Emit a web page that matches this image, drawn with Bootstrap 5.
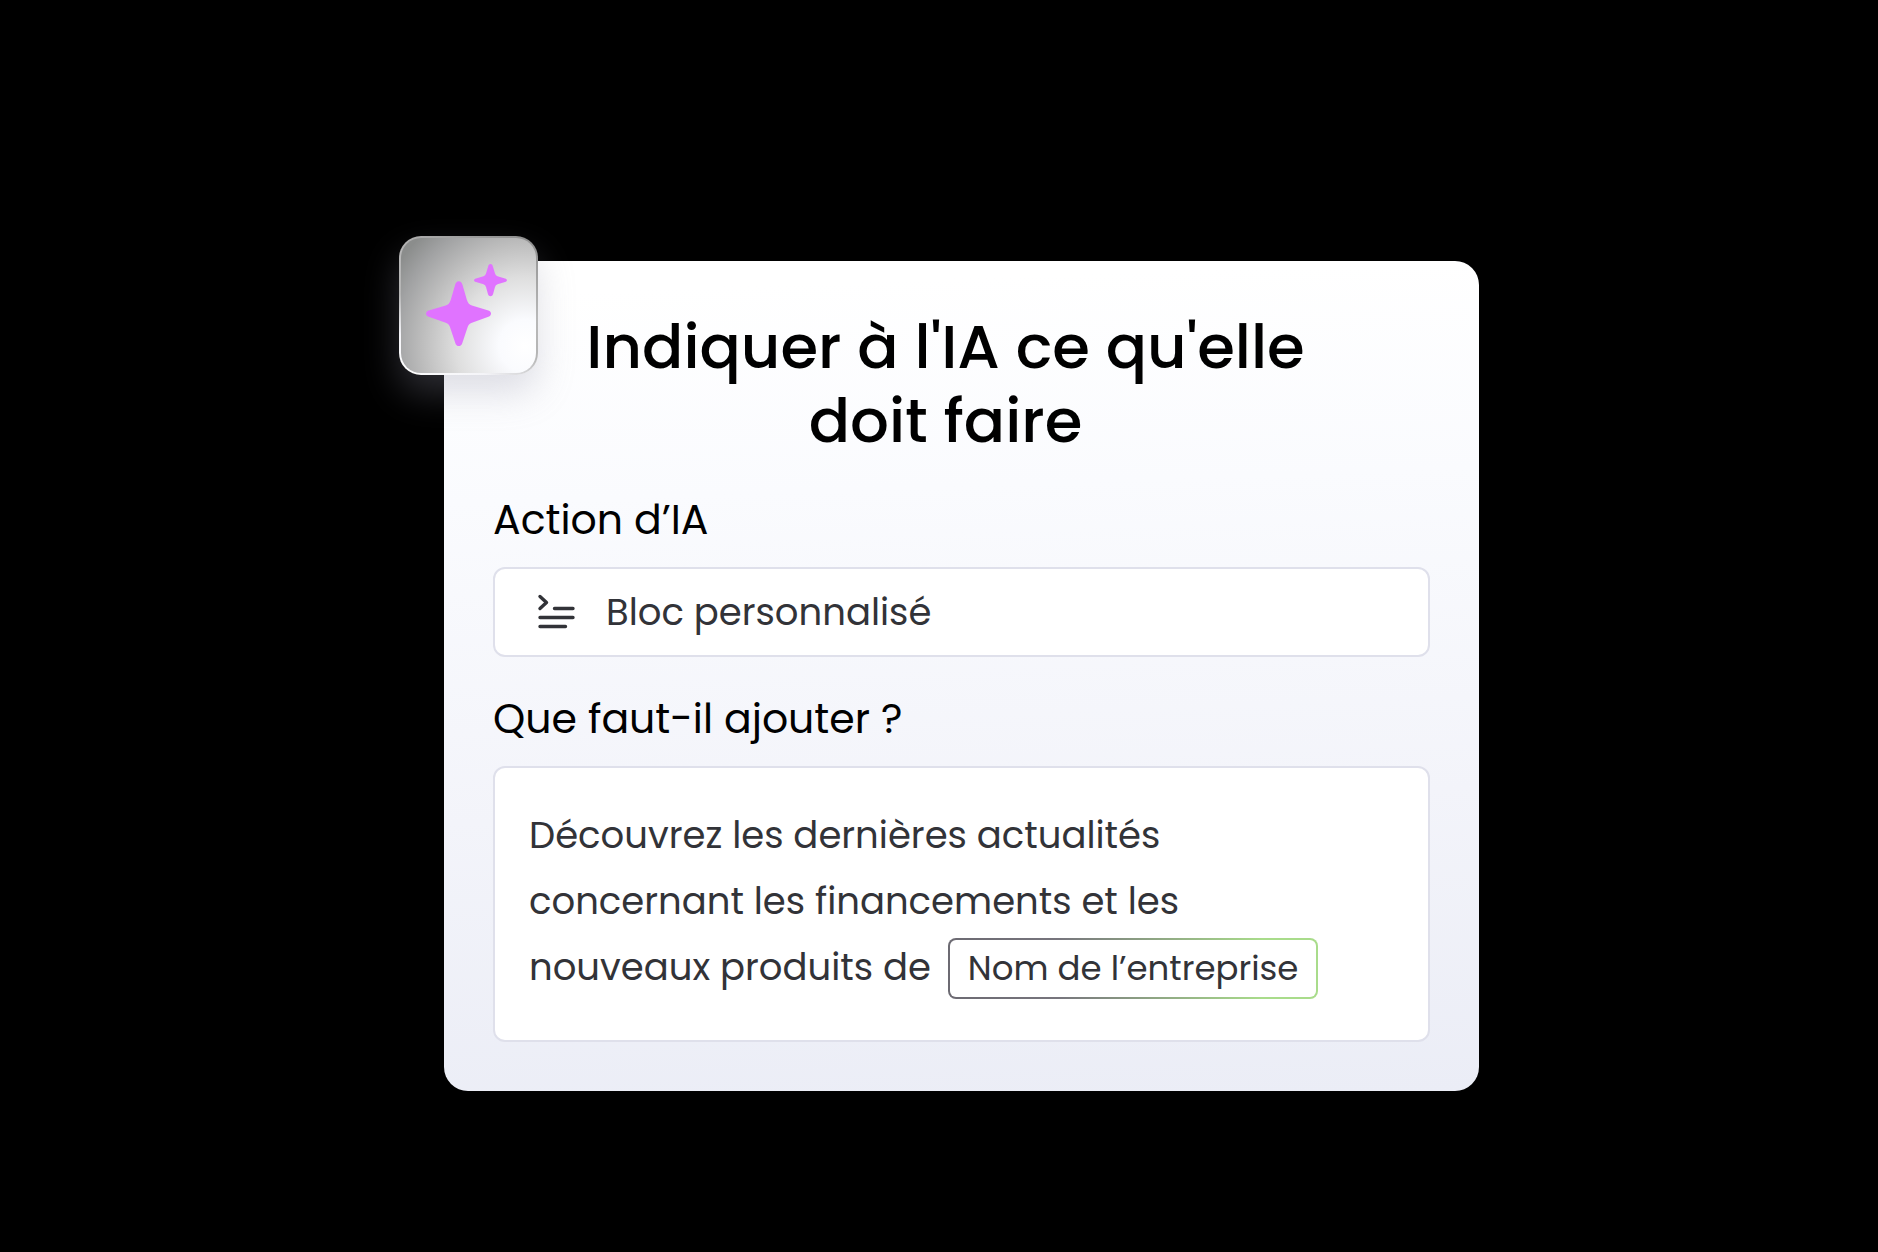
<!DOCTYPE html>
<html lang="fr">
<head>
<meta charset="utf-8">
<meta name="viewport" content="width=device-width, initial-scale=1">
<title>Action d’IA</title>
<link href="https://cdn.jsdelivr.net/npm/bootstrap@5.3.0/dist/css/bootstrap.min.css" rel="stylesheet">
<style>
  body { background: #000; color: #000; font-family: Poppins, Inter, sans-serif; }
  .stage { padding: 100px 0 0 45px; }
  .ai-panel {
    width: 100%; max-width: 1035px; padding: 49px;
    border-radius: 24px;
    background: linear-gradient(178deg, #fff 4%, #fafbfe 28%, #f3f4fa 65%, #ebedf6 100%);
  }
  .ai-title { font-size: 61px; line-height: 74px; font-weight: 500; padding: 0 92px 0 60px; margin-bottom: 37px; }
  .ai-label { font-size: 41px; line-height: 50px; margin-bottom: 22px; }
  .field-box { background: #fff; border: 2px solid #dfe0eb; border-radius: 12px; color: #323338; font-size: 37px; }
  .field-row { height: 90px; padding-left: 42px; margin-bottom: 37px; }
  .field-row input { font-size: 37px; color: #323338; padding: 2px 0 0 29px; }
  .field-row input:focus { color: #323338; }
  .prompt-area { padding: 34px 34px 40px; line-height: 66px; }
  .token-chip {
    display: inline-block; margin-left: 7px; padding: 0 18px;
    font-size: 34px; line-height: 57px; border: 2px solid transparent; border-radius: 8px;
    background: linear-gradient(#fff, #fff) padding-box,
      linear-gradient(90deg, #6c6a72 0%, #77757d 30%, #a9dc8b 85%, #a9dc8b 100%) border-box;
  }
  .spark-tile {
    left: -45px; top: -25px; width: 139px; height: 139px; border: 2px solid transparent; border-radius: 22px;
    background:
      radial-gradient(circle at 92% 80%, #fff 0%, #fafbfe 16%, #dedede 42%, #bebebe 62%, #a0a1a2 80%, #8b8d8c 92%) padding-box,
      linear-gradient(25deg, #fff 0%, #f4f4f8 20%, #b5b5b5 40%, #b8b8b8 60%, #8d8d8d 100%) border-box;
    box-shadow: 0 18px 36px rgba(150, 150, 168, .3);
  }
</style>
</head>
<body>
<main class="stage min-vh-100 d-flex align-items-center justify-content-center">
  <form class="ai-panel position-relative">
    <div class="spark-tile position-absolute" aria-hidden="true">
      <svg class="d-block" width="135" height="135" viewBox="0 0 135 135" fill="#e073ff">
        <path d="M57.800 43.200c1.900 0 3 1.300 3.600 3.300l4.500 15.500q1.500 4.500 5 5.500l16.500 5c3.500 1.200 3.500 5 0 6.200l-16.500 6q-3.500 1-4.500 5l-5 15c-1 4.500-6.200 4.500-7.200 0l-5-15q-1-4-4.500-5l-17-6c-3.500-1.200-3.500-5 0-6.200l17-5q3.500-1 5-5.500l4.500-15.500c.6-2 1.700-3.300 3.600-3.300z"/>
        <path d="M89.500 26c1.300 0 1.900.8 2.300 2.200l2.200 7.300q.6 2.200 2.500 2.800l7.500 2.200c2.600.8 2.600 2.700 0 3.500l-7.500 2.200q-1.900.6-2.500 2.800l-2 7.300c-.7 2.600-4.300 2.600-5 0l-2-7.300q-.6-2.200-2.500-2.800l-7.500-2.200c-2.600-.8-2.600-2.700 0-3.500l7.500-2.200q1.900-.6 2.500-2.800l2.200-7.300c.4-1.400 1-2.200 2.300-2.200z"/>
      </svg>
    </div>

    <h1 class="ai-title text-center">Indiquer à l'IA ce qu'elle doit faire</h1>

    <label class="ai-label d-block" for="action">Action d’IA</label>
    <div class="field-box field-row d-flex align-items-center">
      <svg class="flex-shrink-0" width="40" height="38" viewBox="0 0 40 38" fill="none" stroke="#323338" stroke-width="3.400" stroke-linecap="round" stroke-linejoin="round" aria-hidden="true">
        <path d="M3 3.500l6.500 6L3 15.500M17.500 15.500h18.500M3 24.500h33M3 33.500h25.500"/>
      </svg>
      <input class="form-control border-0 shadow-none bg-transparent" id="action" type="text" value="Bloc personnalisé">
    </div>

    <label class="ai-label d-block" id="prompt-label">Que faut-il ajouter ?</label>
    <div class="field-box prompt-area" role="textbox" aria-multiline="true" aria-labelledby="prompt-label" contenteditable="true" spellcheck="false">Découvrez les dernières actualités<br>concernant les financements et les<br>nouveaux produits de <span class="token-chip" contenteditable="false">Nom de l’entreprise</span></div>
  </form>
</main>
<script src="https://cdn.jsdelivr.net/npm/bootstrap@5.3.0/dist/js/bootstrap.bundle.min.js"></script>
</body>
</html>
